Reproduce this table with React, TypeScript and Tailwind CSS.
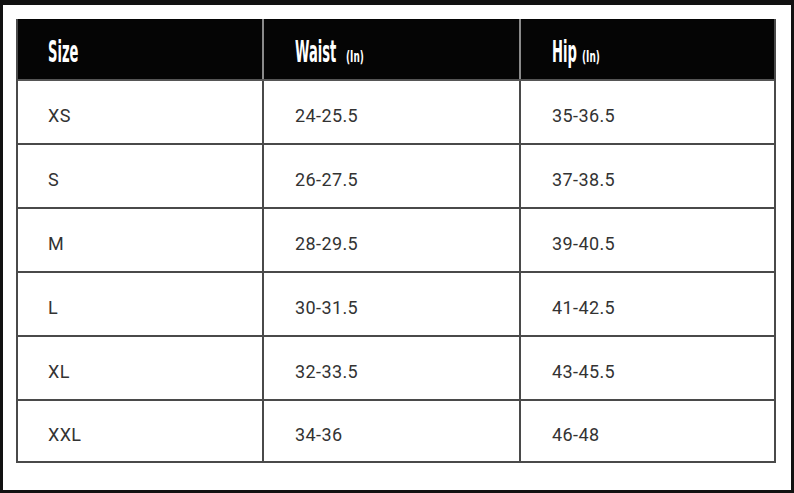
const rows = [
  { size: "XS", waist: "24-25.5", hip: "35-36.5" },
  { size: "S", waist: "26-27.5", hip: "37-38.5" },
  { size: "M", waist: "28-29.5", hip: "39-40.5" },
  { size: "L", waist: "30-31.5", hip: "41-42.5" },
  { size: "XL", waist: "32-33.5", hip: "43-45.5" },
  { size: "XXL", waist: "34-36", hip: "46-48" },
];

function HeadLabel({ label, unit, w }: { label: string; unit?: string; w: string }) {
  return (
    <div className="flex items-baseline gap-[9px] pt-[8px] text-white font-['DejaVu_Sans_Condensed',sans-serif] font-bold">
      <span className={`inline-block origin-left scale-x-[0.52] scale-y-[1.05] text-[28px] leading-none whitespace-nowrap ${w}`}>
        {label}
      </span>
      {unit && (
        <span className="inline-block origin-left scale-x-[0.62] text-[16px] leading-none whitespace-nowrap">
          ({unit})
        </span>
      )}
    </div>
  );
}

export default function App() {
  return (
    <div className="w-[794px] h-[493px] bg-white border-t-[5px] border-l-[3px] border-r-[3px] border-b-[3px] border-[#111] pl-[13px] pt-[14px]">
      <div className="w-[760px] border-2 border-t-0 border-[#4a4a4a]">
        {/* header */}
        <div className="flex h-[62px] bg-[#050505] border-b-2 border-[#555]">
          <div className="w-[246px] flex items-center pl-[30px] border-r-2 border-[#8a8a8a]">
            <HeadLabel label="Size" w="w-[32px]" />
          </div>
          <div className="w-[257px] flex items-center pl-[31px] border-r-2 border-[#8a8a8a]">
            <HeadLabel label="Waist" unit="In" w="w-[42px]" />
          </div>
          <div className="flex-1 flex items-center pl-[31px]">
            <HeadLabel label="Hip" unit="In" w="w-[21px]" />
          </div>
        </div>
        {/* body */}
        {rows.map((r, i) => (
          <div
            key={r.size}
            className={`flex font-['Roboto',sans-serif] text-[18px] tracking-[0.4px] text-[#333] ${
              i < rows.length - 1 ? "h-[64px] border-b-2 border-[#4a4a4a]" : "h-[60px]"
            }`}
          >
            <div className="w-[246px] flex items-center pl-[30px] pt-[6px] border-r-2 border-[#4a4a4a]">{r.size}</div>
            <div className="w-[257px] flex items-center pl-[31px] pt-[6px] border-r-2 border-[#4a4a4a]">{r.waist}</div>
            <div className="flex-1 flex items-center pl-[31px] pt-[6px]">{r.hip}</div>
          </div>
        ))}
      </div>
    </div>
  );
}
